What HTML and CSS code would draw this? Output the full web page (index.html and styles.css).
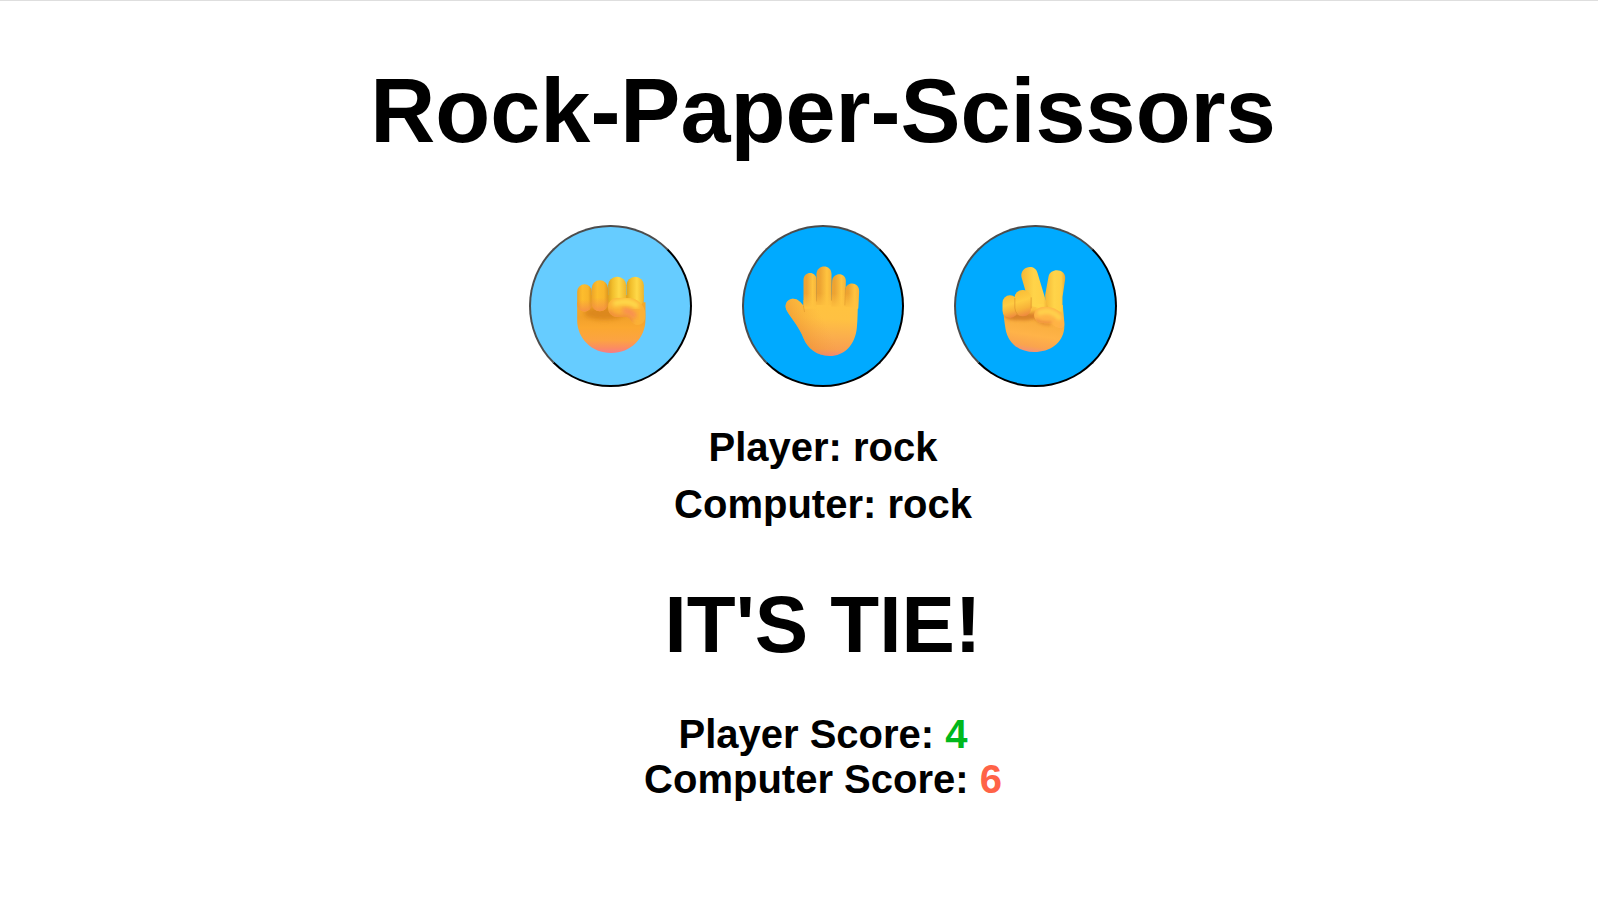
FILE: index.html
```html
<!DOCTYPE html>
<html lang="en">
<head>
<meta charset="utf-8">
<title>Rock-Paper-Scissors</title>
<link rel="stylesheet" href="styles.css">
</head>
<body>
<main class="game">
  <h1 class="title">Rock-Paper-Scissors</h1>
  <div class="choices">
    <button class="choice active" aria-label="rock">
      <svg class="hand" viewBox="121.5 123 300 300">
        <defs>
          <linearGradient id="rPalm" x1="0" y1="0" x2="0" y2="1">
            <stop offset="0" stop-color="#f3a92b"/><stop offset=".3" stop-color="#f2a12b"/><stop offset=".5" stop-color="#fba830"/><stop offset=".75" stop-color="#fca342"/><stop offset=".9" stop-color="#fb8c62"/><stop offset="1" stop-color="#f87b85"/>
          </linearGradient>
          <linearGradient id="rDark" x1="0" y1="0" x2="1" y2="0">
            <stop offset="0" stop-color="#eda427"/><stop offset=".35" stop-color="#fdbd2d"/><stop offset=".75" stop-color="#f9b52a"/><stop offset="1" stop-color="#dd961e"/>
          </linearGradient>
          <linearGradient id="rLight" x1="0" y1="0" x2="1" y2="0">
            <stop offset="0" stop-color="#dca01e"/><stop offset=".25" stop-color="#f2bf2d"/><stop offset=".6" stop-color="#ffd948"/><stop offset="1" stop-color="#eeb52c"/>
          </linearGradient>
          <linearGradient id="rTip" x1="0" y1="0" x2="0" y2="1">
            <stop offset=".55" stop-color="#f58b4b" stop-opacity="0"/><stop offset="1" stop-color="#f4874c" stop-opacity=".8"/>
          </linearGradient>
          <filter id="soft" x="-40%" y="-80%" width="180%" height="260%"><feGaussianBlur stdDeviation="7"/></filter>
          <clipPath id="rClip"><path d="M170 262H375V312C375 370 330 414 272 414C213 414 170 370 170 315Z"/></clipPath>
          <clipPath id="rThumbClip"><path d="M290 248H320C350 248 375 270 375 300C375 322 362 333 345 329C333 326 332 310 318 306H291C272 305 261 292 263 274C264 258 275 249 290 248Z"/></clipPath>
        </defs>
        <path fill="#e7a326" d="M185 240H369V300H175Z"/>
        <path fill="url(#rPalm)" d="M170 262H375V312C375 370 330 414 272 414C213 414 170 370 170 315Z"/>
        <g clip-path="url(#rClip)"><ellipse cx="251" cy="294" rx="60" ry="20" fill="#d07a12" opacity=".65" filter="url(#soft)"/></g>
        <rect x="318" y="185" width="52" height="92" rx="26" fill="url(#rLight)"/>
        <rect x="263" y="185" width="54" height="96" rx="26" fill="url(#rLight)"/>
        <rect x="170" y="208" width="44" height="82" rx="22" fill="url(#rDark)"/>
        <rect x="170" y="208" width="44" height="82" rx="22" fill="url(#rTip)"/>
        <rect x="213" y="196" width="50" height="93" rx="25" fill="url(#rDark)"/>
        <rect x="213" y="196" width="50" height="93" rx="25" fill="url(#rTip)"/>
        <g clip-path="url(#rThumbClip)">
          <rect x="255" y="240" width="125" height="95" fill="#fbb136"/>
          <path d="M264 286C267 304 288 309 318 306Q329 312 333 324" fill="none" stroke="#ee883b" stroke-width="14" filter="url(#soft)"/>
          <path d="M285 265Q325 253 347 272" fill="none" stroke="#ffdc4b" stroke-width="18" stroke-linecap="round" filter="url(#soft)"/>
          <path d="M312 287Q330 287 341 302" fill="none" stroke="#f87f60" stroke-width="14" stroke-linecap="round" opacity=".8" filter="url(#soft)"/>
        </g>
      </svg>
    </button>
    <button class="choice" aria-label="paper">
      <svg class="hand" viewBox="115.5 123 300 300">
        <defs>
          <linearGradient id="pFinger" x1="0" y1="0" x2="1" y2="0">
            <stop offset="0" stop-color="#efa12e"/><stop offset=".25" stop-color="#eda433"/><stop offset=".7" stop-color="#ffc43f"/><stop offset="1" stop-color="#f6b33a"/>
          </linearGradient>
          <linearGradient id="pPalm" x1=".65" y1="0" x2=".6" y2="1">
            <stop offset="0" stop-color="#ffc33f"/><stop offset=".35" stop-color="#ffc142"/><stop offset=".65" stop-color="#fbaf4c"/><stop offset=".88" stop-color="#f8a050"/><stop offset="1" stop-color="#f3827a"/>
          </linearGradient>
          <linearGradient id="pEdge" x1="0" y1=".5" x2=".5" y2=".3">
            <stop offset="0" stop-color="#e98b2b" stop-opacity=".75"/><stop offset="1" stop-color="#f5a33a" stop-opacity="0"/>
          </linearGradient>
          <linearGradient id="pFade" x1="0" y1="0" x2="0" y2="1">
            <stop offset="0" stop-color="#ffc240" stop-opacity="0"/><stop offset="1" stop-color="#ffc240"/>
          </linearGradient>
        </defs>
        <path fill="url(#pPalm)" d="M207 255H371C369 285 370 312 367 338C362 390 329 423 285 423C246 423 220 400 207 370C196 340 173 314 158 289C148 273 155 256 170 252C186 248 198 260 207 272Z"/>
        <path fill="url(#pEdge)" d="M207 255H371C369 285 370 312 367 338C362 390 329 423 285 423C246 423 220 400 207 370C196 340 173 314 158 289C148 273 155 256 170 252C186 248 198 260 207 272Z"/>
        <path fill="url(#pFinger)" d="M207 275V195C207 168 246 167 246 195V275Z"/>
        <path fill="url(#pFinger)" d="M330 275L332 226C334 197 376 200 374 230L371 280Z"/>
        <path fill="url(#pFinger)" d="M290 275L293 198C295 171 335 171 334 199L332 275Z"/>
        <path fill="url(#pFinger)" d="M245 270L246 178C247 147 291 147 291 178L291 270Z"/>
        <path fill="url(#pFade)" d="M208 235H373L371 281H208Z"/>
        <path fill="none" stroke="#d58a25" stroke-width="2.5" stroke-linecap="round" opacity=".55" d="M246 190V258M291 195V256M333 219L331 270M207 274L210 290"/>
      </svg>
    </button>
    <button class="choice" aria-label="scissors">
      <svg class="hand" viewBox="121.5 123 300 300">
        <defs>
          <linearGradient id="sFinger" x1="0" y1="0" x2="1" y2="0">
            <stop offset="0" stop-color="#f5b735"/><stop offset=".45" stop-color="#ffd449"/><stop offset=".8" stop-color="#ffcf45"/><stop offset="1" stop-color="#eda832"/>
          </linearGradient>
          <linearGradient id="sPalm" x1=".6" y1="0" x2=".4" y2="1">
            <stop offset="0" stop-color="#ffca42"/><stop offset=".35" stop-color="#f8ad3d"/><stop offset=".65" stop-color="#ffb348"/><stop offset=".87" stop-color="#faa44e"/><stop offset="1" stop-color="#f2907a"/>
          </linearGradient>
          <linearGradient id="sCurl" x1=".4" y1="0" x2=".6" y2="1">
            <stop offset="0" stop-color="#f9bd36"/><stop offset=".4" stop-color="#ffcc42"/><stop offset=".7" stop-color="#f8b339"/><stop offset="1" stop-color="#ee873f"/>
          </linearGradient>
          <filter id="blur" x="-40%" y="-80%" width="180%" height="260%"><feGaussianBlur stdDeviation="5"/></filter>
          <clipPath id="sClip"><path d="M174 280L240 265L352 270C353 295 358 315 356 342C351 384 314 411 266 411C224 411 188 388 180 341C177 320 174 306 174 280Z"/></clipPath>
          <clipPath id="sThumbClip"><path d="M290 276C315 272 357 284 357 326C357 344 335 343 320 328C312 321 296 328 280 322C260 313 259 283 290 276Z"/></clipPath>
        </defs>
        <path fill="url(#sPalm)" d="M174 280L240 265L352 270C353 295 358 315 356 342C351 384 314 411 266 411C224 411 188 388 180 341C177 320 174 306 174 280Z"/>
        <path fill="url(#sFinger)" d="M300 285L299 240L309 185C314 157 363 160 359 192L351 246V290Z"/>
        <path fill="url(#sFinger)" d="M242 270L240 228L228 187C222 155 268 143 276 174L297 244L310 285Z"/>
        <g clip-path="url(#sClip)">
          <ellipse cx="226" cy="304" rx="50" ry="12" fill="#d47b25" opacity=".85" filter="url(#blur)"/>
          <path d="M264 290Q270 328 315 327" fill="none" stroke="#dd812d" stroke-width="8" opacity=".8" filter="url(#blur)"/>
          <path d="M285 278Q275 265 302 240" fill="none" stroke="#ffd449" stroke-width="18" filter="url(#blur)"/>
        </g>
        <rect x="171" y="241" width="45" height="68" rx="22" fill="url(#sCurl)"/>
        <rect x="207" y="225" width="50" height="79" rx="24" fill="url(#sCurl)"/>
        <path fill="none" stroke="#d98b28" stroke-width="3" opacity=".6" d="M208 249V279Q209 290 216 298M257 247V280"/>
        <g clip-path="url(#sThumbClip)">
          <rect x="255" y="265" width="110" height="80" fill="#ffb345"/>
          <path d="M284 293Q315 281 340 307" fill="none" stroke="#ffd04b" stroke-width="17" stroke-linecap="round" filter="url(#blur)"/>
          <path d="M269 314Q286 326 318 323" fill="none" stroke="#ec8a3d" stroke-width="8" filter="url(#blur)"/>
          <path d="M335 350L356 335" stroke="#ffb04a" stroke-width="20" filter="url(#blur)"/>
        </g>
      </svg>
    </button>
  </div>
  <div class="pick">Player: rock</div>
  <div class="pick">Computer: rock</div>
  <div class="result">IT'S TIE!</div>
  <div class="score">Player Score: <span class="player-score">4</span></div>
  <div class="score">Computer Score: <span class="computer-score">6</span></div>
</main>
</body>
</html>
```

FILE: styles.css
```css
* {
  box-sizing: border-box;
}

body {
  margin: 0;
  height: 910px;
  overflow: hidden;
  border-top: 1px solid #dedede;
  background: #fff;
  color: #000;
  font-family: Arial, "Liberation Sans", sans-serif;
  font-weight: bold;
}

.game {
  display: flex;
  flex-direction: column;
  align-items: center;
  padding: 58px 0 0 48px;
}

.title {
  margin: 0 0 62px;
  font-size: 90px;
  line-height: 104px;
}

.choices {
  display: flex;
  gap: 50px;
  margin-bottom: 37px;
}

.choice {
  display: flex;
  align-items: center;
  justify-content: center;
  width: 162.5px;
  height: 162px;
  padding: 0;
  border: 2px solid;
  border-color: #4c4c4c #000 #000 #4c4c4c;
  border-radius: 50%;
  background: #00aaff;
}

.choice.active {
  background: #66ccff;
}

.hand {
  flex: none;
  width: 100px;
  height: 100px;
  overflow: visible;
}

.pick {
  margin-bottom: 11px;
  font-size: 40px;
  line-height: 46px;
}

.result {
  margin: 41px 0;
  font-size: 80px;
  line-height: 92px;
}

.score {
  font-size: 40px;
  line-height: 45px;
}

.player-score {
  color: #00b81c;
}

.computer-score {
  color: #ff6347;
}
```
